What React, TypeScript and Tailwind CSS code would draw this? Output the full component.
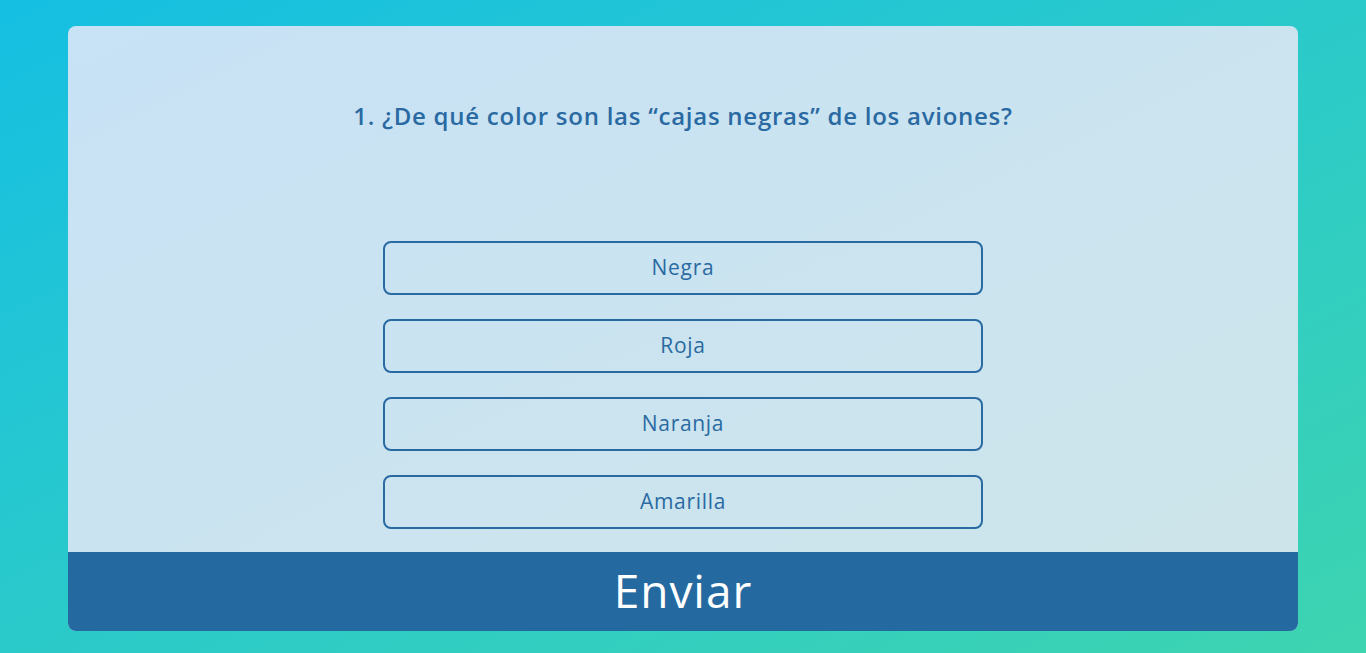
import React from "react";

const options = ["Negra", "Roja", "Naranja", "Amarilla"];

export default function App() {
  return (
    <div
      className="w-full h-[653px] bg-gradient-to-br from-[#15bfe2] to-[#3dd4b0] pt-[26px] px-[68px]"
      style={{ fontFamily: '"Open Sans", "Noto Sans", sans-serif' }}
    >
      <div className="h-[605px] rounded-[8px] overflow-hidden bg-gradient-to-br from-[#c8e2f6] to-[#cde5e9] flex flex-col">
        <div className="flex-1 flex flex-col items-center">
          <h1 className="mt-[74px] h-[32px] leading-[32px] text-[24px] font-semibold text-[#2a6aa2] tracking-[0.75px]">
            1. ¿De qué color son las “cajas negras” de los aviones?
          </h1>
          <div className="mt-[109px] flex flex-col gap-[24px]">
            {options.map((o) => (
              <button
                key={o}
                className="w-[600px] h-[54px] rounded-[8px] border-2 border-[#2a6aa2] text-[21px] tracking-[0.7px] text-[#2a6aa2] flex items-center justify-center"
              >
                {o}
              </button>
            ))}
          </div>
        </div>
        <div className="h-[79px] bg-[#246aa0] flex items-center justify-center text-white text-[46px] tracking-[1px] leading-none pb-[4px]">
          Enviar
        </div>
      </div>
    </div>
  );
}
